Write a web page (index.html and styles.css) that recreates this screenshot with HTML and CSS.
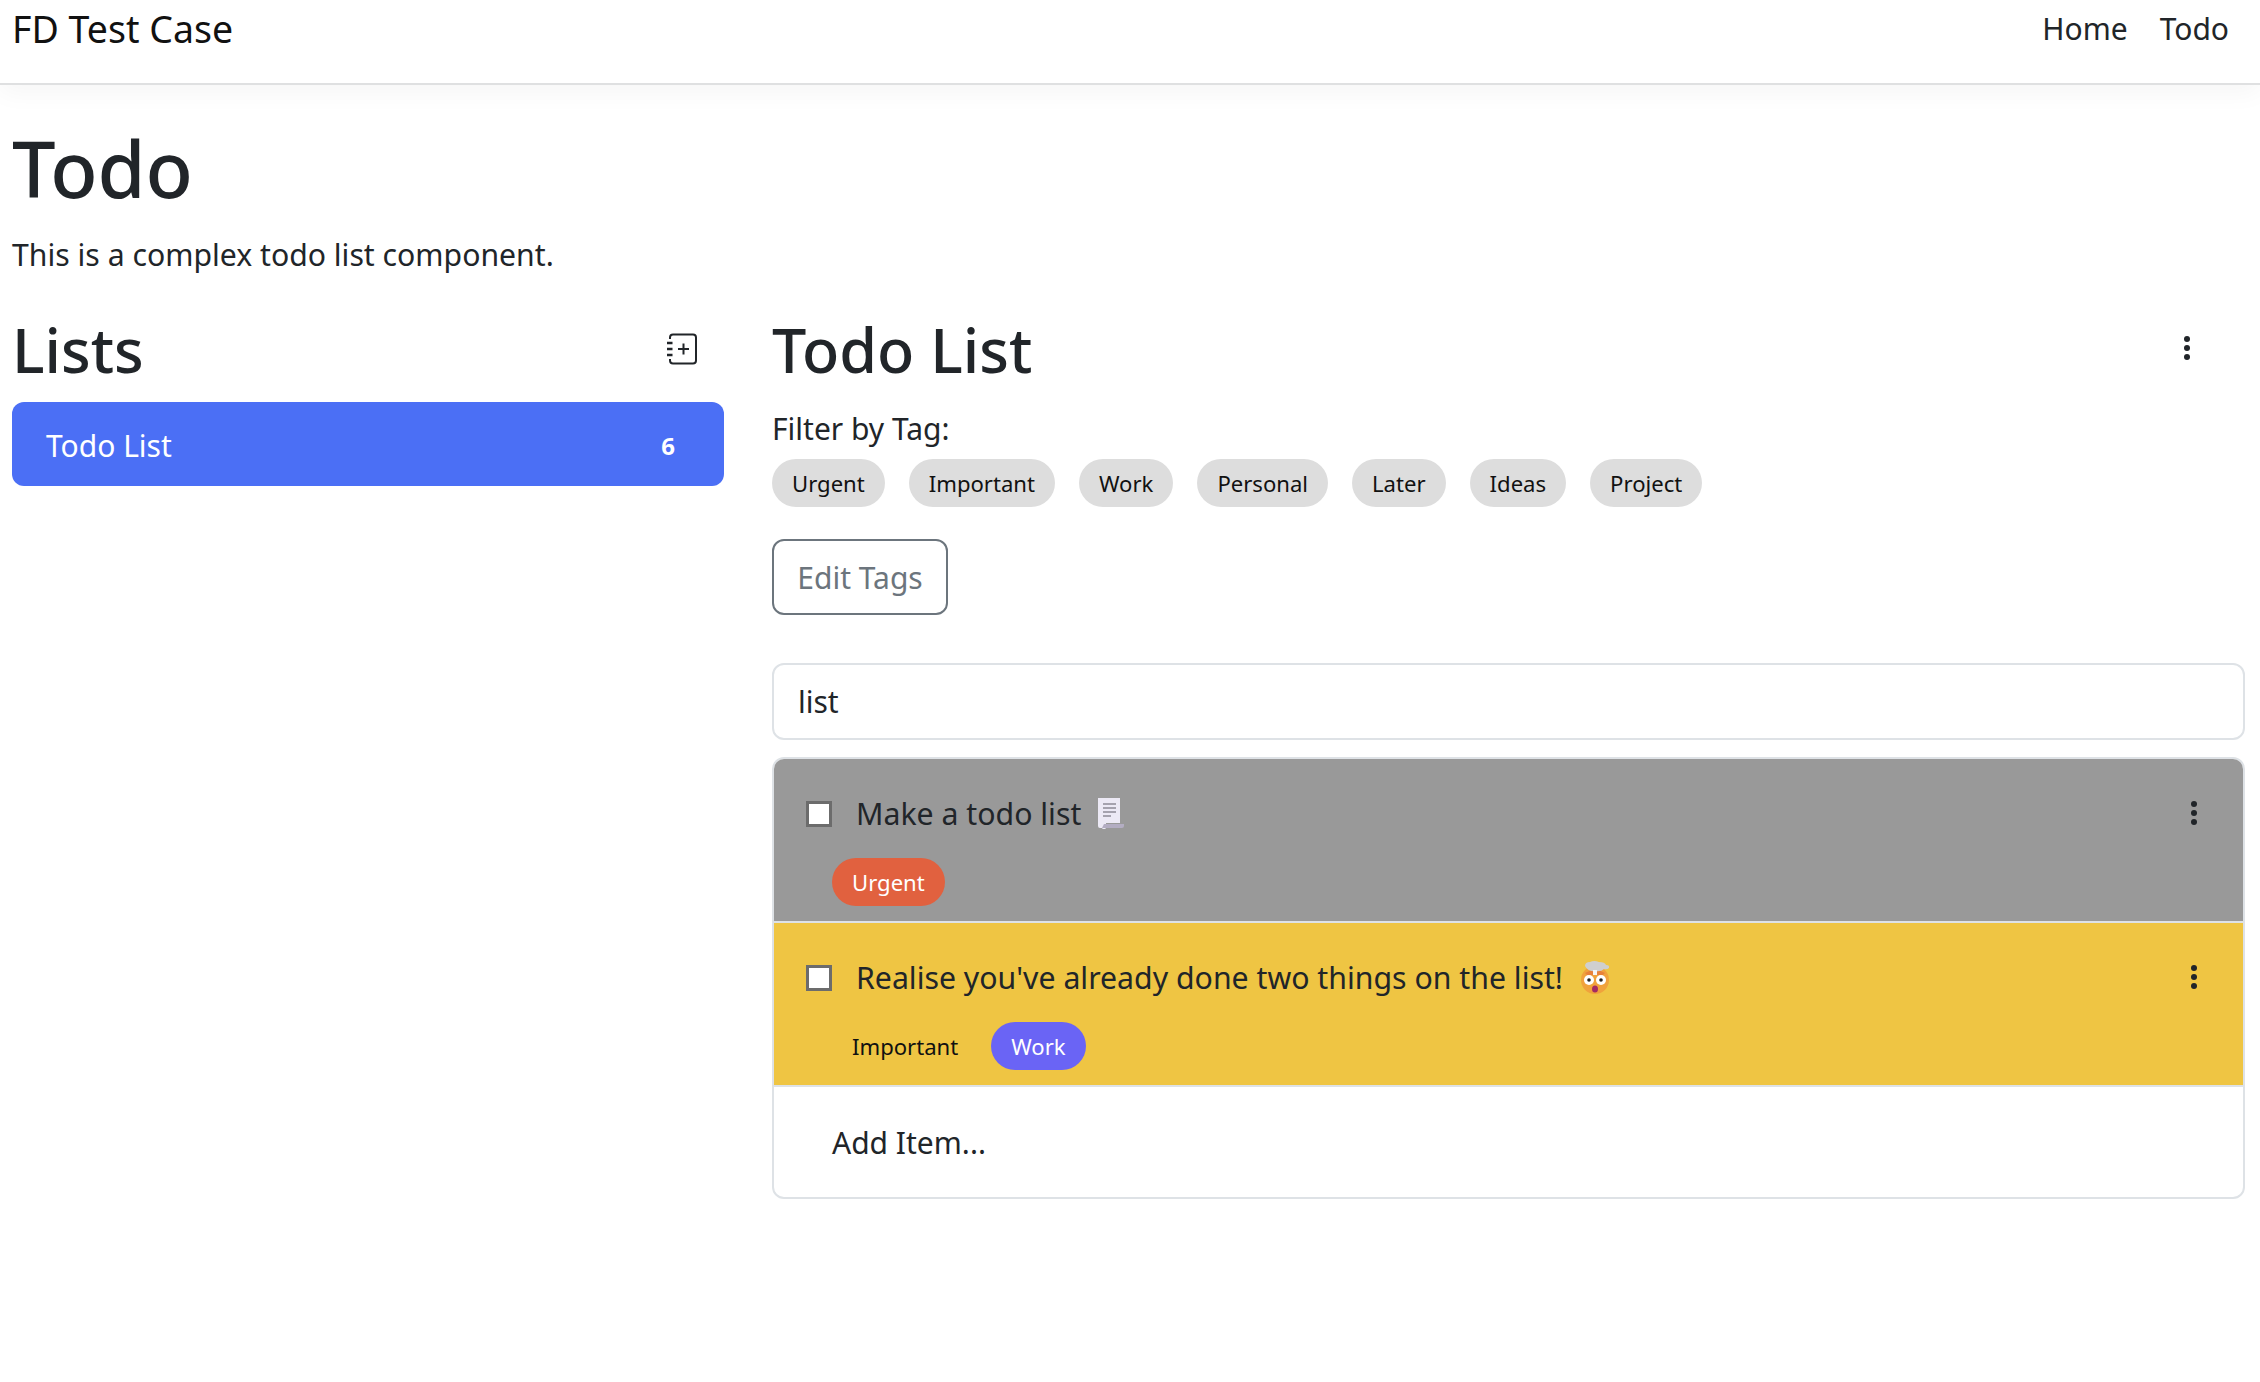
FILE: index.html
```html
<!DOCTYPE html>
<html lang="en">
<head>
    <meta charset="UTF-8">
    <meta name="viewport" content="width=device-width, initial-scale=1.0">
    <title>FD Test Case</title>
    <link rel="stylesheet" href="styles.css">
</head>
<body>

    <nav class="navbar">
        <a class="brand">FD Test Case</a>
        <div class="nav-links">
            <a class="nav-link">Home</a>
            <a class="nav-link">Todo</a>
        </div>
    </nav>

    <main class="page">
        <h1 class="page-title">Todo</h1>
        <p class="page-lead">This is a complex todo list component.</p>

        <div class="columns">
            <section class="lists-col">
                <div class="col-head">
                    <h2 class="col-title">Lists</h2>
                    <svg class="add-list" width="32" height="32" viewBox="0 0 32 32" fill="none" stroke="#212529" stroke-width="2">
                        <path d="M4 6V4.500A3 3 0 0 1 7 1.500H27A3 3 0 0 1 30 4.500V27.500A3 3 0 0 1 27 30.500H7A3 3 0 0 1 4 27.500V26"/>
                        <path d="M17.500 10.500V21.500M12 16H23"/>
                        <path d="M1 10H6.500M1 16H6.500M1 22H6.500" stroke-width="2.500"/>
                    </svg>
                </div>
                <div class="list-item">
                    <span>Todo List</span>
                    <span class="list-count">6</span>
                </div>
            </section>

            <section class="todo-col">
                <div class="col-head">
                    <h2 class="col-title">Todo List</h2>
                    <svg class="kebab kebab-head" width="8" height="26" viewBox="0 0 8 26" fill="#212529">
                        <circle cx="4" cy="4" r="3"/><circle cx="4" cy="13" r="3"/><circle cx="4" cy="22" r="3"/>
                    </svg>
                </div>

                <div class="filter-label">Filter by Tag:</div>
                <div class="tag-row">
                    <span class="tag">Urgent</span>
                    <span class="tag">Important</span>
                    <span class="tag">Work</span>
                    <span class="tag">Personal</span>
                    <span class="tag">Later</span>
                    <span class="tag">Ideas</span>
                    <span class="tag">Project</span>
                </div>

                <button class="edit-tags">Edit Tags</button>

                <input class="search" type="text" value="list">

                <div class="todo-group">
                    <div class="todo-item todo-gray">
                        <div class="todo-line">
                            <span class="check"></span>
                            <span class="todo-text">Make a todo list</span>
                            <svg class="emoji" width="28" height="32" viewBox="0 0 28 32">
                                <path d="M1 1H23V26H9V29A2 2 0 0 1 5 31H3A2 2 0 0 1 1 29Z" fill="#ece9f5"/>
                                <path d="M7 27H27V29A2 2 0 0 1 25 31H5Z" fill="#b3adc2"/>
                                <path d="M6 7H19M6 11H19M6 15H19M6 19H14" stroke="#8d8a96" stroke-width="1.500"/>
                            </svg>
                            <svg class="kebab" width="8" height="26" viewBox="0 0 8 26" fill="#212529">
                                <circle cx="4" cy="4" r="3"/><circle cx="4" cy="13" r="3"/><circle cx="4" cy="22" r="3"/>
                            </svg>
                        </div>
                        <div class="todo-tags">
                            <span class="tag tag-urgent">Urgent</span>
                        </div>
                    </div>
                    <div class="todo-item todo-yellow">
                        <div class="todo-line">
                            <span class="check"></span>
                            <span class="todo-text">Realise you've already done two things on the list!</span>
                            <svg class="emoji" width="32" height="34" viewBox="0 0 32 34">
                                <circle cx="16" cy="20" r="14" fill="#f0a23c"/>
                                <path d="M6 13Q16 7 26 13L24 15H8Z" fill="#e8813a"/>
                                <path d="M6 6Q6 2 11 2Q15 0 20 2Q26 2 27 5Q31 5 30 8Q28 10 25 9Q22 12 16 11Q9 12 6 6Z" fill="#cfcfcf"/>
                                <rect x="14" y="10" width="4" height="5" fill="#f4f4f4"/>
                                <circle cx="10" cy="20" r="5" fill="#fff"/><circle cx="22" cy="20" r="5" fill="#fff"/>
                                <circle cx="10" cy="20" r="1.800" fill="#222"/><circle cx="22" cy="20" r="1.800" fill="#222"/>
                                <ellipse cx="16" cy="29" rx="3" ry="3.500" fill="#a32a63"/>
                            </svg>
                            <svg class="kebab" width="8" height="26" viewBox="0 0 8 26" fill="#212529">
                                <circle cx="4" cy="4" r="3"/><circle cx="4" cy="13" r="3"/><circle cx="4" cy="22" r="3"/>
                            </svg>
                        </div>
                        <div class="todo-tags">
                            <span class="tag tag-plain">Important</span>
                            <span class="tag tag-work">Work</span>
                        </div>
                    </div>
                    <div class="add-item">Add Item...</div>
                </div>
            </section>
        </div>
    </main>

</body>
</html>
```

FILE: styles.css
```css
* {
    box-sizing: border-box;
}
body {
    margin: 0;
    font-family: "Noto Sans", sans-serif;
    font-size: 30px;
    color: #212529;
    background-color: white;
}
.navbar {
    display: flex;
    justify-content: space-between;
    height: 85px;
    padding: 7px 31px 0 12px;
    border-bottom: 2px solid #dfe0e1;
    box-shadow: 0 8px 24px rgba(0, 0, 0, 0.04);
}
.brand {
    font-size: 37.5px;
    line-height: 44px;
    color: #111;
}
.nav-links {
    display: flex;
    gap: 32px;
}
.nav-link {
    font-size: 30px;
    line-height: 44px;
}
.page {
    padding: 0 15px 0 12px;
}
.page-title {
    margin: 35px 0 0;
    font-size: 77.5px;
    font-weight: 500;
    line-height: 96px;
}
.page-lead {
    margin: 15px 0 0;
    font-size: 30.2px;
    line-height: 48px;
}
.columns {
    display: grid;
    grid-template-columns: 712px 1fr;
    gap: 48px;
    margin-top: 32px;
}
.col-head {
    display: flex;
    justify-content: space-between;
    align-items: center;
    height: 77px;
    margin-bottom: 14px;
}
.col-title {
    margin: 0;
    font-size: 61px;
    font-weight: 500;
    line-height: 77px;
}
.add-list {
    margin-right: 26px;
    margin-bottom: 2px;
}
.list-item {
    display: flex;
    justify-content: space-between;
    align-items: center;
    height: 84px;
    padding: 2px 49px 0 34px;
    border-radius: 12px;
    background: #4b6ff5;
    color: white;
}
.list-count {
    font-size: 24px;
    font-weight: 700;
}
.kebab-head {
    margin-right: 54px;
    margin-bottom: 4px;
}
.filter-label {
    margin-top: 19px;
    line-height: 44px;
}
.tag-row {
    display: flex;
    gap: 24px;
    margin-top: 8px;
}
.tag {
    display: inline-block;
    height: 48px;
    padding: 0 20px;
    border-radius: 24px;
    background: #dddddd;
    color: #111;
    font-size: 22.1px;
    line-height: 48px;
}
.edit-tags {
    display: block;
    width: 176px;
    height: 76px;
    margin-top: 32px;
    padding: 0;
    border: 2px solid #6c757d;
    border-radius: 12px;
    background: white;
    color: #6c757d;
    font-family: inherit;
    font-size: 30px;
}
.search {
    display: block;
    width: 100%;
    height: 77px;
    margin-top: 48px;
    padding: 0 24px;
    border: 2px solid #dee2e6;
    border-radius: 12px;
    color: #212529;
    font-family: inherit;
    font-size: 30px;
}
.todo-group {
    margin-top: 17px;
    border: 2px solid #dee2e6;
    border-radius: 12px;
    overflow: hidden;
}
.todo-item {
    height: 164px;
    padding: 30px 45px 0 32px;
    border-bottom: 2px solid #dee2e6;
}
.todo-gray {
    background: #999999;
}
.todo-yellow {
    background: #efc543;
}
.todo-line {
    display: flex;
    align-items: center;
    height: 48px;
}
.check {
    width: 26px;
    height: 26px;
    margin-top: 2px;
    border: 3px solid #6c6c6c;
    background: white;
}
.todo-text {
    margin-left: 24px;
    font-size: 30.25px;
}
.emoji {
    margin-left: 16px;
}
.kebab {
    margin-left: auto;
}
.todo-tags {
    display: flex;
    gap: 13px;
    margin-top: 21px;
    padding-left: 26px;
}
.tag-urgent {
    background: #e1613f;
    color: white;
}
.tag-work {
    background: #6a64f5;
    color: white;
}
.tag-plain {
    background: transparent;
}
.add-item {
    height: 110px;
    padding-left: 58px;
    line-height: 112px;
}
```
